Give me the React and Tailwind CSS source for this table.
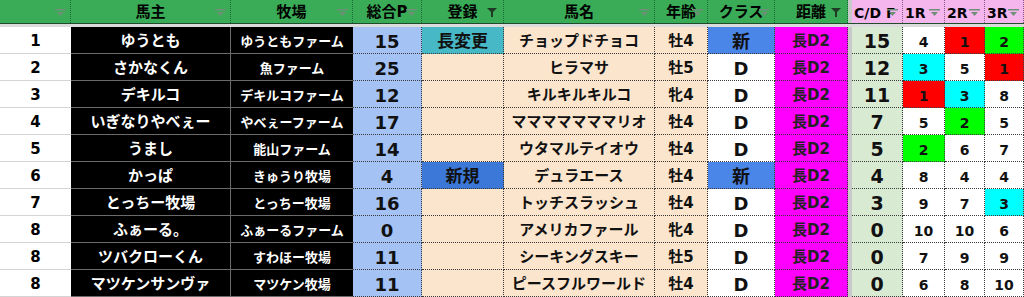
const FONT = { fontFamily: '"DejaVu Sans", "Noto Sans CJK JP", "Noto Sans", sans-serif' };

const rows = [
  [1, "ゆうとも", "ゆうともファーム", 15, "長変更", "チョップドチョコ", "牡4", "新", 15, [4, 1, 2]],
  [2, "さかなくん", "魚ファーム", 25, "", "ヒラマサ", "牡5", "D", 12, [3, 5, 1]],
  [3, "デキルコ", "デキルコファーム", 12, "", "キルキルキルコ", "牝4", "D", 11, [1, 3, 8]],
  [4, "いぎなりやべぇー", "やべぇーファーム", 17, "", "マママママママリオ", "牡4", "D", 7, [5, 2, 5]],
  [5, "うまし", "能山ファーム", 14, "", "ウタマルテイオウ", "牡4", "D", 5, [2, 6, 7]],
  [6, "かっぱ", "きゅうり牧場", 4, "新規", "デュラエース", "牡4", "新", 4, [8, 4, 4]],
  [7, "とっちー牧場", "とっちー牧場", 16, "", "トッチスラッシュ", "牡4", "D", 3, [9, 7, 3]],
  [8, "ふぁーる。", "ふぁーるファーム", 0, "", "アメリカファール", "牝4", "D", 0, [10, 10, 6]],
  [8, "ツバクローくん", "すわほー牧場", 11, "", "シーキングスキー", "牡5", "D", 0, [7, 9, 9]],
  [8, "マツケンサンヴァ", "マツケン牧場", 11, "", "ピースフルワールド", "牡4", "D", 0, [6, 8, 10]],
];

const cols = "grid grid-cols-[71px_160px_122px_69px_82px_151px_53px_67px_73px_4px_51px_42px_40px_39px]";

function Filter({ active }) {
  if (active) {
    return (
      <svg width="10" height="9" viewBox="0 0 10 9" className="absolute right-1.5 bottom-1.5">
        <path d="M0 0 H10 L6 4 V9 H4 V4 Z" fill="#1f3a25" />
      </svg>
    );
  }
  return (
    <svg width="11" height="8" viewBox="0 0 11 8" className="absolute right-1 bottom-1.5">
      <rect x="0" y="0" width="11" height="1.5" fill="#6f8f78" />
      <path d="M2 3 H9 L5.5 7 Z" fill="#6f8f78" />
    </svg>
  );
}

function Head({ label, green = true, active }) {
  return (
    <div
      className={`relative flex items-center h-[23px] pt-0.5 font-bold text-black leading-none border-r border-dotted ${
        green
          ? "bg-[#3aac57] border-[#1d6b34] text-[15px] justify-center"
          : "bg-[#f4b6ec] border-[#8a5a84] text-[14px] justify-start pl-0.5"
      }`}
    >
      <span>{label}</span>
      <Filter active={active} />
    </div>
  );
}

const rColor = (n) =>
  n === 1 ? "bg-[#ff0000]" : n === 2 ? "bg-[#00ff00]" : n === 3 ? "bg-[#00ffff]" : "bg-white";

const dot = "border-r border-b border-dotted border-[#3a3a3a]";
const cell = "flex items-center justify-center leading-none whitespace-nowrap pt-[3px]";

export default function App() {
  return (
    <div className="w-[1024px] h-[297px] overflow-hidden bg-white" style={FONT}>
      <div className={cols}>
        <Head label="" />
        <Head label="馬主" />
        <Head label="牧場" />
        <Head label="総合P" />
        <Head label="登録" active />
        <Head label="馬名" />
        <Head label="年齢" />
        <Head label="クラス" />
        <Head label="距離" active />
        <div className="bg-[#c9c9c9]" />
        <Head label="C/D F" green={false} />
        <Head label="1R" green={false} />
        <Head label="2R" green={false} />
        <Head label="3R" green={false} />
      </div>
      <div className="h-px bg-[#1d4d2a]" />
      <div className="h-[3px] bg-[#dcdcdc]" />
      {rows.map((r, i) => {
        const [rank, owner, farm, pts, reg, horse, age, cls, cdf, rs] = r;
        return (
          <div key={i} className={`${cols} h-[27px] font-bold`}>
            <div className={`${cell} bg-white text-[15px] text-black border-b border-[#d4d4d4]`}>{rank}</div>
            <div className={`${cell} bg-black text-white text-[15px] border-b border-r border-[#6b6b6b]`}>{owner}</div>
            <div className={`${cell} bg-black text-white text-[13px] border-b border-[#6b6b6b] overflow-hidden`}>{farm}</div>
            <div className={`${cell} bg-[#a4c2f4] text-[18px] text-[#111] ${dot}`}>{pts}</div>
            <div
              className={`${cell} text-[17px] text-[#111] ${dot} ${
                reg === "長変更" ? "bg-[#46b8c6]" : reg === "新規" ? "bg-[#3c78d8]" : "bg-[#fce5cd]"
              }`}
            >
              {reg}
            </div>
            <div className={`${cell} bg-[#fce5cd] text-[15px] text-[#111] ${dot}`}>{horse}</div>
            <div className={`${cell} bg-[#fce5cd] text-[15px] text-[#111] ${dot}`}>{age}</div>
            <div className={`${cell} text-[18px] text-[#111] ${dot} ${cls === "新" ? "bg-[#4a86e8]" : "bg-white"}`}>
              {cls}
            </div>
            <div className={`${cell} bg-[#ff00ff] text-[15px] text-[#222] ${dot}`}>長D2</div>
            <div className="bg-[#c9c9c9]" />
            <div className={`${cell} bg-[#d9ead3] text-[19px] text-[#111] ${dot}`}>{cdf}</div>
            {rs.map((n, j) => (
              <div key={j} className={`${cell} text-[14px] text-[#111] ${rColor(n)} ${dot}`}>
                {n}
              </div>
            ))}
          </div>
        );
      })}
    </div>
  );
}
